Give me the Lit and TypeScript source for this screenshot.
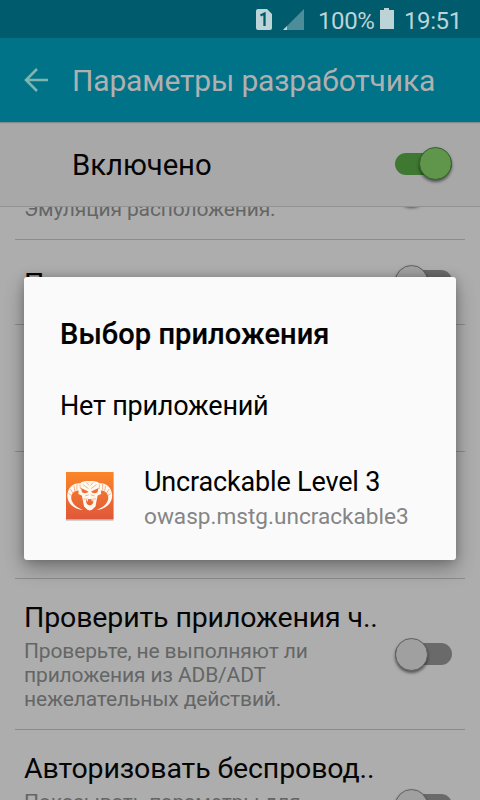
import { LitElement, html, css, svg } from "lit";
import { customElement, property } from "lit/decorators.js";
import { classMap } from "lit/directives/class-map.js";

@customElement("toggle-switch")
class ToggleSwitch extends LitElement {
  @property({ type: Boolean }) on = false;
  static styles = css`
    :host { display: block; flex: none; width: 57px; height: 32px; }
    .box { height: 32px; display: flex; align-items: center; }
    .track { width: 57px; height: 22px; border-radius: 11px; background: #6a6a6a; display: flex; align-items: center; }
    .thumb { flex: none; box-sizing: border-box; width: 33px; height: 33px; border-radius: 50%; background: #a0a0a0; border: 1px solid #606060; box-shadow: 0 2px 3px rgba(0,0,0,.5); }
    .on { background: #3f7830; justify-content: flex-end; }
    .on .thumb { background: #5f964c; border-color: #35602a; }
  `;
  render() {
    return html`<div class="box"><div class=${classMap({ track: true, on: this.on })}><div class="thumb"></div></div></div>`;
  }
}

const half = svg`
  <path d="M13.800 11.200C7 10.500 1.500 16 1.300 23.500C1.300 31 7.500 37.300 17 38C9.500 35 5.300 31 5.200 25.500C5.300 21.500 8.500 18.800 12.500 18.600L14.200 20.500L15.500 14Z"/>
  <path d="M24 9.200C19.500 8.800 14.500 9.800 13 12.600C12.300 16.500 13 19 12.300 22L15.800 23.500L16.800 28L18 34.500L21.500 37.800L24 38.600V33.600C21.500 33.400 20 31.500 20.200 29.500L20.300 26.600L24 27.200Z"/>
  <path class="socket" d="M15 16L22.300 19.500C21.500 21.500 18 21.800 16 20.200Z"/>
  <path class="line" d="M17 12.500L22.500 16.700M20.500 10.500L23 13.500M13.800 12.500L14.600 17M11 12L10.800 18.400M8 13.600L8.800 19.500M4.500 17L6.800 21M2.600 21.500L5.500 23.500M18.800 24L22.700 22.800M17.500 27L19.800 27"/>
  <path d="M20.400 26.500L21.300 30L22.200 27Z"/>`;

@customElement("app-root")
class AppRoot extends LitElement {
  static styles = css`
    :host { display: block; position: relative; width: 480px; height: 800px; overflow: hidden; background: #adadad; font-family: Roboto, "Noto Sans", sans-serif; color: #050505; }
    .screen { display: flex; flex-direction: column; height: 800px; }
    .status { flex: none; height: 38px; box-sizing: border-box; padding-left: 256px; background: #005b6d; display: flex; color: #bcd3d8; font-size: 24px; line-height: 42px; white-space: nowrap; }
    .status svg { flex: none; width: 64px; height: 38px; }
    .status .battery { width: 29px; }
    .pct { width: 56px; margin-left: -2px; letter-spacing: -.4px; }
    .clock { margin-left: 1px; letter-spacing: -.4px; }
    .bar { flex: none; height: 84px; background: #017389; display: flex; align-items: center; color: #b0b0b0; font-size: 30px; line-height: 36px; box-shadow: 0 1px 1px #7f8a8c; z-index: 1; }
    .bar svg { width: 72px; height: 84px; }
    .bar span { letter-spacing: -.15px; white-space: nowrap; padding-top: 2px; }
    .master { flex: none; height: 85px; box-sizing: border-box; padding: 0 28px 1px 72px; background: #a8a8a8; display: flex; align-items: center; justify-content: space-between; border-bottom: 1px solid #929292; font-size: 29.300px; line-height: 36px; }
    .master span { padding-top: 2px; letter-spacing: -.05px; }
    .list { flex: 1; min-height: 0; overflow: hidden; }
    .row { box-sizing: border-box; margin: 0 15px; border-bottom: 1px solid #8c8c8c; padding: 21px 13px 0 9px; display: flex; justify-content: space-between; }
    .row toggle-switch { align-self: center; margin-top: -21px; }
    .partial { height: 100px; margin-top: -67px; padding-top: 53px; }
    .partial toggle-switch { margin-top: -53px; }
    .short { height: 85px; padding-top: 26px; }
    .short toggle-switch { margin-top: -28px; }
    .mid { height: 127px; }
    .tall { height: 151px; }
    .name { font-size: 28.500px; letter-spacing: -.13px; line-height: 36px; white-space: nowrap; }
    .desc { font-size: 21px; letter-spacing: -.14px; line-height: 24px; margin-top: 3px; color: #646666; white-space: pre; }
    .partial .desc { margin-top: 4px; }
    .dialog { position: absolute; left: 24px; top: 277px; width: 432px; height: 283px; box-sizing: border-box; padding: 39px 36px 0; border-radius: 3px; background: #fafafa; color: #000; box-shadow: 0 8px 20px rgba(0,0,0,.33), 0 0 8px rgba(0,0,0,.18); white-space: nowrap; }
    .heading { font-size: 29px; font-weight: 500; letter-spacing: .08px; line-height: 36px; -webkit-text-stroke: .2px #000; }
    .option { font-size: 27px; letter-spacing: -.23px; line-height: 36px; margin-top: 36px; }
    .app { display: flex; margin-top: 36px; }
    .app svg { flex: none; width: 60px; height: 72px; margin-right: 24px; }
    .app .title { font-size: 27px; letter-spacing: -.17px; line-height: 36px; margin-top: 4px; }
    .app .pkg { font-size: 22.600px; line-height: 30px; margin-top: 2px; color: #858585; }
    .skull { fill: #fff8ef; }
    .socket { fill: #ee7035; }
    .line { fill: none; stroke: #f08a4c; stroke-width: .6; }
  `;
  render() {
    return html`
      <div class="screen">
        <div class="status">
          <svg viewBox="0 0 64 38">
            <path fill="#bcd3d8" d="M2 9H11L16 14V28Q16 30 14 30H2Q0 30 0 28V11Q0 9 2 9Z"/>
            <path fill="none" stroke="#005b6d" stroke-width="2.300" d="M4.500 15.500L8.500 13.500V26"/>
            <path fill="#4d8d99" d="M48 9V30H27Z"/><path fill="#bcd3d8" d="M31 26V30H27Z"/>
          </svg>
          <span class="pct">100%</span>
          <svg class="battery" viewBox="0 0 29 38"><path fill="#bcd3d8" d="M6 10H10V8H15V10H20V29H6Z"/></svg>
          <span class="clock">19:51</span>
        </div>
        <div class="bar">
          <svg viewBox="0 0 72 84" fill="none" stroke="#7fb5ae" stroke-width="2.600"><path d="M48 42H26M37 31L26 42L37 53"/></svg>
          <span>Параметры разработчика</span>
        </div>
        <div class="master"><span>Включено</span><toggle-switch on></toggle-switch></div>
        <div class="list">
          <div class="row partial"><div class="desc">Эмуляция расположения.</div><toggle-switch></toggle-switch></div>
          <div class="row short"><div class="name">П</div><toggle-switch></toggle-switch></div>
          <div class="row mid"></div>
          <div class="row mid"></div>
          <div class="row tall"><div><div class="name">Проверить приложения ч..</div><div class="desc">Проверьте, не выполняют ли
приложения из ADB/ADT
нежелательных действий.</div></div><toggle-switch></toggle-switch></div>
          <div class="row tall"><div><div class="name">Авторизовать беспровод..</div><div class="desc">Показывать параметры для</div></div><toggle-switch></toggle-switch></div>
        </div>
      </div>
      <div class="dialog">
        <div class="heading">Выбор приложения</div>
        <div class="option">Нет приложений</div>
        <div class="app">
          <svg viewBox="0 0 60 72">
            <defs><linearGradient id="g" x2="0" y2="1"><stop stop-color="#fb8628"/><stop offset="1" stop-color="#e0573a"/></linearGradient></defs>
            <rect x="6" y="13" width="47.500" height="47.800" fill="#c9c9c9"/>
            <rect x="6" y="12" width="47.500" height="47.300" fill="url(#g)"/>
            <g class="skull" transform="translate(6 12)">${half}</g>
            <g class="skull" transform="translate(53.500 12) scale(-1 1)">${half}</g>
          </svg>
          <div><div class="title">Uncrackable Level 3</div><div class="pkg">owasp.mstg.uncrackable3</div></div>
        </div>
      </div>`;
  }
}
